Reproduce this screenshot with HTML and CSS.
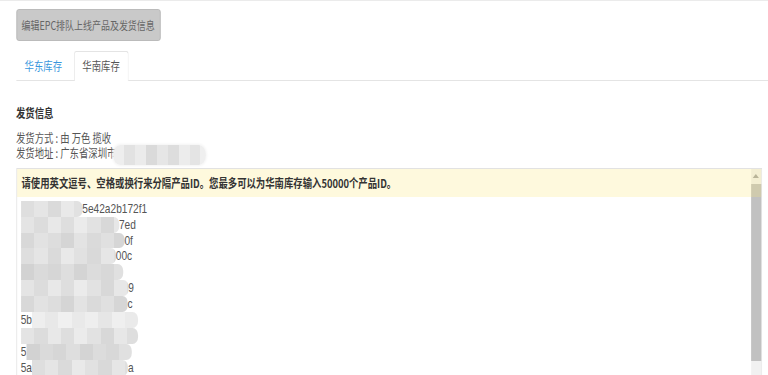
FILE: index.html
```html
<!DOCTYPE html>
<html lang="zh-CN">
<head>
<meta charset="utf-8">
<title>华南库存</title>
<link rel="stylesheet" href="styles.css">
</head>
<body>
<div class="page">
  <div class="toolbar">
    <button class="btn-edit" type="button">编辑EPC排队上线产品及发货信息</button>
  </div>
  <ul class="tabs">
    <li class="tab">华东库存</li>
    <li class="tab active">华南库存</li>
  </ul>
  <section class="ship">
    <h3 class="ship-title">发货信息</h3>
    <p class="ship-line">发货方式 : 由 万色 揽收</p>
    <p class="ship-line">发货地址 : 广东省深圳市<span class="addr-mask"></span></p>
  </section>
  <div class="id-box">
    <div class="id-list">
      <div class="id-row"><span class="mask m1" style="width:79px"></span><span class="tail">5e42a2b172f1</span></div>
      <div class="id-row"><span class="mask m2" style="width:126px"></span><span class="tail">7ed</span></div>
      <div class="id-row"><span class="mask m3" style="width:133px"></span><span class="tail">0f</span></div>
      <div class="id-row"><span class="mask m1" style="width:122px"></span><span class="tail">00c</span></div>
      <div class="id-row"><span class="mask m4" style="width:131px"></span></div>
      <div class="id-row"><span class="mask m2" style="width:138px"></span><span class="tail">9</span></div>
      <div class="id-row"><span class="mask m3" style="width:137px"></span><span class="tail">c</span></div>
      <div class="id-row"><span class="tail">5b</span><span class="mask m5" style="width:136px"></span></div>
      <div class="id-row"><span class="mask m2" style="width:150px"></span></div>
      <div class="id-row"><span class="tail">5</span><span class="mask m4" style="width:135px"></span></div>
      <div class="id-row"><span class="tail">5a</span><span class="mask m1" style="width:123px"></span><span class="tail">a</span></div>
    </div>
    <div class="sbar">
      <div class="sbar-up"><span class="sbar-arrow"></span></div>
      <div class="sbar-thumb"></div>
      <div class="sbar-track"></div>
    </div>
    <div class="id-hint">请使用英文逗号、空格或换行来分隔产品ID。您最多可以为华南库存输入50000个产品ID。</div>
  </div>
</div>
</body>
</html>
```
FILE: styles.css
```css
html, body {
  margin: 0;
  height: 100%;
  overflow: hidden;
  background: #fff;
}

body {
  font-family: "Noto Sans CJK SC", "Noto Sans", sans-serif;
  font-size: 12px;
  color: #555;
}

.page {
  width: 984.6px;
  height: 375px;
  box-sizing: border-box;
  padding-left: 20.5px;
  border-top: 1px solid #ebebeb;
  transform: scaleX(0.78);
  transform-origin: 0 0;
}

.toolbar {
  padding-top: 8px;
}

.btn-edit {
  display: block;
  width: 185px;
  height: 32px;
  margin: 0;
  padding: 0;
  border: 1px solid #b6b6b6;
  border-radius: 3px;
  background: #c9c9c9;
  color: #666;
  font-family: "Noto Sans CJK SC", sans-serif;
  font-size: 11.5px;
  line-height: 30px;
  text-align: center;
}

.tabs {
  list-style: none;
  margin: 10px 0 0;
  padding: 0;
  display: flex;
  gap: 4px;
  border-bottom: 1px solid #e4e4e4;
}

.tab {
  padding: 7px 10px 8px;
  line-height: 14px;
  border: 1px solid transparent;
  border-bottom: 0;
  margin-bottom: -1px;
  border-radius: 3px 3px 0 0;
  color: #3a96dd;
}

.tab.active {
  color: #555;
  border-color: #e4e4e4;
  background: #fff;
}

.ship-title {
  margin: 24px 0 9px;
  font-size: 12px;
  line-height: 16px;
  font-weight: bold;
  color: #333;
}

.ship-line {
  margin: 0;
  line-height: 15px;
  color: #555;
}

.addr-mask {
  display: inline-block;
  width: 119px;
  height: 20px;
  margin: -4px 0 -4px -4px;
  vertical-align: middle;
  border-radius: 9px;
  box-shadow: 0 0 3px 1px #f3f3f3;
  background: linear-gradient(90deg, #eeeeee 0 14px, #e2e2e2 14px 28px, #ebebeb 28px 42px, #dadada 42px 56px, #e6e6e6 56px 70px, #dddddd 70px 84px, #ececec 84px 98px, #e4e4e4 98px 112px, #efefef 112px);
}

.id-box {
  position: relative;
  display: flex;
  height: 240px;
  margin: 7px 8px 0 0;
  border: 1px solid #e2e2e2;
}

.id-list {
  flex: 1;
  padding: 32px 0 0 5px;
  font-family: "Liberation Sans", Arial, sans-serif;
  font-size: 13px;
  color: #555;
}

.id-row {
  display: flex;
  height: 15.9px;
  line-height: 15.9px;
  white-space: nowrap;
}

.mask {
  display: block;
  height: 100%;
  border-radius: 0 7px 7px 0;
}

.m1 {
  background: linear-gradient(90deg, #dedede 0 17px, #e5e5e5 17px 34px, #dadada 34px 51px, #e9e9e9 51px 68px, #e1e1e1 68px 85px, #d9d9d9 85px 102px, #e6e6e6 102px 119px, #dfdfdf 119px 136px, #eaeaea 136px);
}

.m2 {
  background: linear-gradient(90deg, #e4e4e4 0 17px, #dcdcdc 17px 34px, #e8e8e8 34px 51px, #dedede 51px 68px, #ebebeb 68px 85px, #e2e2e2 85px 102px, #d8d8d8 102px 119px, #e7e7e7 119px 136px, #dedede 136px);
}

.m3 {
  background: linear-gradient(90deg, #d8d8d8 0 17px, #e2e2e2 17px 34px, #dddddd 34px 51px, #d5d5d5 51px 68px, #e3e3e3 68px 85px, #dadada 85px 102px, #e0e0e0 102px 119px, #d6d6d6 119px 136px, #e4e4e4 136px);
}

.m4 {
  background: linear-gradient(90deg, #d2d2d2 0 17px, #dadada 17px 34px, #d6d6d6 34px 51px, #dedede 51px 68px, #d4d4d4 68px 85px, #dcdcdc 85px 102px, #d8d8d8 102px 119px, #e0e0e0 119px 136px, #d9d9d9 136px);
}

.m5 {
  background: linear-gradient(90deg, #eeeeee 0 17px, #e8e8e8 17px 34px, #f0f0f0 34px 51px, #e9e9e9 51px 68px, #eeeeee 68px 85px, #e6e6e6 85px 102px, #efefef 102px 119px, #eaeaea 119px);
}

.tail {
  display: block;
}

.sbar {
  flex: 0 0 13px;
  display: flex;
  flex-direction: column;
  background: #f1f1f1;
}

.sbar-up {
  height: 15px;
  display: flex;
  align-items: center;
  justify-content: center;
}

.sbar-arrow {
  width: 0;
  height: 0;
  border-left: 4px solid transparent;
  border-right: 4px solid transparent;
  border-bottom: 4px solid #a3a3a3;
}

.sbar-thumb {
  height: 177px;
  background: #c1c1c1;
}

.sbar-track {
  flex: 1;
}

.id-hint {
  position: absolute;
  top: 0;
  left: 0;
  right: 0;
  height: 28px;
  padding-left: 6px;
  line-height: 28px;
  font-weight: bold;
  color: #333;
  background: rgba(250, 230, 120, 0.25);
}
```
